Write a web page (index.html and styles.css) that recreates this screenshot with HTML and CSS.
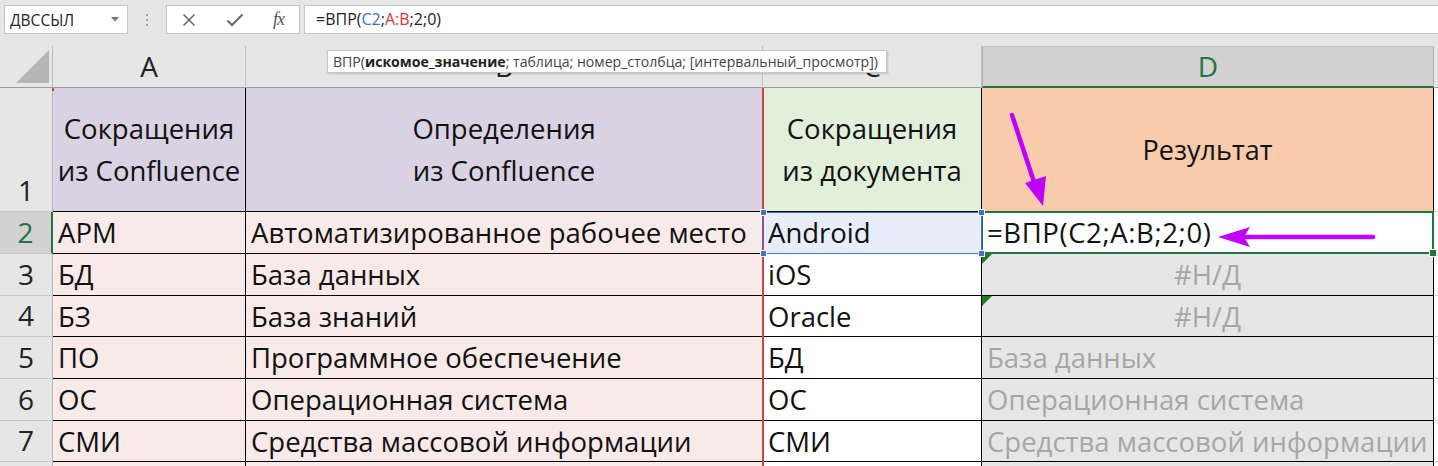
FILE: index.html
```html
<!DOCTYPE html>
<html lang="ru">
<head>
<meta charset="utf-8">
<title>ВПР</title>
<link rel="stylesheet" href="styles.css">
</head>
<body>
<div class="app">
  <div class="toolbar">
    <div class="namebox"><span>ДВССЫЛ</span><svg class="caret" width="8" height="5" viewBox="0 0 8 5"><path d="M0 0h8L4 4.5z" fill="#777"/></svg></div>
    <div class="grip"><i></i><i></i><i></i></div>
    <div class="fbuttons">
      <svg width="14" height="14" viewBox="0 0 14 14"><path d="M1.5 1.5l11 11M12.5 1.5l-11 11" stroke="#6b6b6b" stroke-width="1.6" fill="none"/></svg>
      <svg width="18" height="14" viewBox="0 0 18 14"><path d="M1.5 7.5l4.5 4.5L16.5 1.5" stroke="#6b6b6b" stroke-width="2" fill="none"/></svg>
      <span class="fx">fx</span>
    </div>
    <div class="formula">=ВПР(<span class="ref1">C2</span>;<span class="ref2">A:B</span>;2;0)</div>
  </div>

  <div class="sheet">
    <div class="corner"><svg width="53" height="41" viewBox="0 0 53 41"><polygon points="16,37 49,37 49,4" fill="#b5b5b5"/></svg></div>
    <div class="ch">A</div>
    <div class="ch">B</div>
    <div class="ch">C</div>
    <div class="ch ch-sel">D</div>
    <div class="ch ch-e"></div>

    <div class="rh">1</div>
    <div class="c hd lav"><span>Сокращения</span><span>из Confluence</span></div>
    <div class="c hd lav"><span>Определения</span><span>из Confluence</span></div>
    <div class="c hd grn"><span>Сокращения</span><span>из документа</span></div>
    <div class="c hd pch"><span>Результат</span></div>
    <div class="e"></div>

    <div class="rh rh-sel">2</div>
    <div class="c pink">АРМ</div>
    <div class="c pink">Автоматизированное рабочее место</div>
    <div class="c ref">Android</div>
    <div class="c active">=ВПР(C2;A:B;2;0)</div>
    <div class="e"></div>

    <div class="rh">3</div>
    <div class="c pink">БД</div>
    <div class="c pink">База данных</div>
    <div class="c">iOS</div>
    <div class="c res na err">#Н/Д</div>
    <div class="e"></div>

    <div class="rh">4</div>
    <div class="c pink">БЗ</div>
    <div class="c pink">База знаний</div>
    <div class="c">Oracle</div>
    <div class="c res na err">#Н/Д</div>
    <div class="e"></div>

    <div class="rh">5</div>
    <div class="c pink">ПО</div>
    <div class="c pink">Программное обеспечение</div>
    <div class="c">БД</div>
    <div class="c res">База данных</div>
    <div class="e"></div>

    <div class="rh">6</div>
    <div class="c pink">ОС</div>
    <div class="c pink">Операционная система</div>
    <div class="c">ОС</div>
    <div class="c res">Операционная система</div>
    <div class="e"></div>

    <div class="rh">7</div>
    <div class="c pink">СМИ</div>
    <div class="c pink">Средства массовой информации</div>
    <div class="c">СМИ</div>
    <div class="c res">Средства массовой информации</div>
    <div class="e"></div>

    <div class="rh"></div>
    <div class="c pink"></div>
    <div class="c pink"></div>
    <div class="c"></div>
    <div class="c res"></div>
    <div class="e"></div>
  </div>

  <div class="range-line"></div>
  <div class="range-tick"></div>
  <div class="refbox">
    <i class="h tl"></i><i class="h tr"></i><i class="h bl"></i><i class="h br"></i>
  </div>

  <div class="tooltip">ВПР(<b>искомое_значение</b>; таблица; номер_столбца; [интервальный_просмотр])</div>

  <svg class="arrows" width="1438" height="466" viewBox="0 0 1438 466">
    <line x1="1012" y1="115" x2="1035" y2="185" stroke="#c000ff" stroke-width="4.5" stroke-linecap="round"/>
    <polygon points="1043,206 1025,183 1046,176" fill="#c000ff"/>
    <line x1="1373" y1="237" x2="1240" y2="237" stroke="#c000ff" stroke-width="4.5" stroke-linecap="round"/>
    <polygon points="1218,237 1250,227 1244,237 1250,247" fill="#c000ff"/>
  </svg>
</div>
</body>
</html>
```

FILE: styles.css
```css
* { box-sizing: border-box; margin: 0; padding: 0; }

body {
  margin: 0;
  background: #e6e6e6;
  font-family: "Open Sans", "Noto Sans", sans-serif;
  color: #1e1e1e;
  overflow: hidden;
}

.app {
  position: relative;
  width: 1438px;
  height: 466px;
  overflow: hidden;
}

/* ---------- formula bar ---------- */
.toolbar {
  display: flex;
  align-items: flex-start;
  height: 46px;
  padding: 5px 0 0 4px;
}

.namebox {
  width: 124px;
  height: 29px;
  background: #fff;
  border: 1px solid #c6c6c6;
  display: flex;
  align-items: center;
  justify-content: space-between;
  padding: 0 8px 0 5px;
  font-size: 15.5px;
  color: #262626;
}

.grip {
  width: 38px;
  height: 29px;
  display: flex;
  flex-direction: column;
  align-items: center;
  justify-content: center;
  gap: 3px;
}
.grip i {
  display: block;
  width: 2px;
  height: 2px;
  background: #a0a0a0;
}

.fbuttons {
  width: 134px;
  height: 29px;
  background: #fff;
  border: 1px solid #c6c6c6;
  display: flex;
  align-items: center;
  justify-content: space-between;
  padding: 0 15px 0 15px;
}
.fx {
  font-family: "Liberation Serif", serif;
  font-style: italic;
  font-size: 18px;
  color: #555;
  letter-spacing: -1px;
}

.formula {
  flex: 1;
  margin-left: 4px;
  height: 29px;
  background: #fff;
  border: 1px solid #c6c6c6;
  border-right: none;
  padding-left: 11px;
  font-size: 16px;
  line-height: 27px;
  color: #222;
}
.ref1 { color: #3a6fd0; }
.ref2 { color: #d4363b; }

/* ---------- sheet grid ---------- */
.sheet {
  display: grid;
  grid-template-columns: 53px 193px 517px 219px 452px 1fr;
  grid-template-rows: 42px 124px 42px 42px 41px 42px 42px 41px 10px;
  background: #fff;
}

.corner {
  background: #e6e6e6;
  border-right: 1px solid #b8b8b8;
  border-bottom: 1px solid #9b9b9b;
}
.corner svg { display: block; }

.ch {
  background: #e6e6e6;
  border-right: 1px solid #c2c2c2;
  border-bottom: 1px solid #9b9b9b;
  text-align: center;
  font-size: 28px;
  line-height: 41px;
  color: #222;
}
.ch-sel {
  background: #d2d2d2;
  color: #217346;
  border-top: 1px solid #c6c6c6;
  border-left: 1px solid #b0b0b0;
  border-right: 1px solid #b0b0b0;
  border-bottom: 2px solid #217346;
  line-height: 38px;
}
.ch-e { border-right: none; }

.rh {
  background: #e6e6e6;
  border-right: 1px solid #b8b8b8;
  border-bottom: 1px solid #c8c8c8;
  display: flex;
  align-items: flex-end;
  justify-content: center;
  font-size: 28px;
  line-height: 41px;
  color: #222;
}
.rh-sel {
  background: #d2d2d2;
  color: #217346;
  border-right: 2px solid #217346;
}

.c {
  position: relative;
  border-right: 1px solid #000;
  border-bottom: 1px solid #000;
  font-size: 27.5px;
  line-height: 41px;
  padding-left: 5px;
  white-space: nowrap;
  overflow: hidden;
  color: #111;
}

.e {
  background: #fff;
  border-bottom: 1px solid #d4d4d4;
}

.hd {
  display: flex;
  flex-direction: column;
  align-items: center;
  justify-content: center;
  padding-left: 0;
  line-height: 42px;
}
.pch { font-size: 27px; }
.lav { background: #d9d2e3; }
.grn { background: #e2efda; }
.pch { background: #f8cbad; }
.pink { background: #f9eaea; }
.ref { background: #e8eef9; }

.res {
  background: #e6e6e6;
  color: #a6a6a6;
}
.na { text-align: center; padding-left: 0; }

.err::before {
  content: "";
  position: absolute;
  left: 0;
  top: 0;
  border-top: 10px solid #1e7e1e;
  border-right: 10px solid transparent;
}

.active {
  overflow: visible;
  background: #fff;
  letter-spacing: 0.6px;
}
.active::after {
  content: "";
  position: absolute;
  left: -1px;
  top: -1px;
  right: -1px;
  bottom: -1px;
  border: 2px solid #217346;
}
.active::before {
  content: "";
  position: absolute;
  right: -4px;
  bottom: -4px;
  width: 6px;
  height: 6px;
  background: #217346;
  border: 1px solid #fff;
  z-index: 2;
}

/* ---------- overlays ---------- */
.range-line {
  position: absolute;
  left: 762px;
  top: 88px;
  width: 2px;
  height: 378px;
  background: #c9434b;
}
.range-tick {
  position: absolute;
  left: 52px;
  top: 88px;
  width: 2px;
  height: 3px;
  background: #c9434b;
}

.refbox {
  position: absolute;
  left: 763px;
  top: 212px;
  width: 219px;
  height: 42px;
  border: 1px solid #4472c4;
}
.refbox .h {
  position: absolute;
  width: 5px;
  height: 5px;
  background: #4472c4;
  border: 1px solid #fff;
  box-sizing: content-box;
}
.refbox .tl { left: -4px; top: -4px; }
.refbox .tr { right: -4px; top: -4px; }
.refbox .bl { left: -4px; bottom: -4px; }
.refbox .br { right: -4px; bottom: -4px; }

.tooltip {
  position: absolute;
  left: 327px;
  top: 50px;
  width: 560px;
  height: 23px;
  background: #fff;
  border: 1px solid #c8c8c8;
  box-shadow: 1px 1px 2px rgba(0, 0, 0, 0.18);
  font-size: 14.1px;
  line-height: 21px;
  padding-left: 5px;
  color: #444;
  white-space: nowrap;
}
.tooltip b { color: #222; }

.arrows {
  position: absolute;
  left: 0;
  top: 0;
  pointer-events: none;
}
```
